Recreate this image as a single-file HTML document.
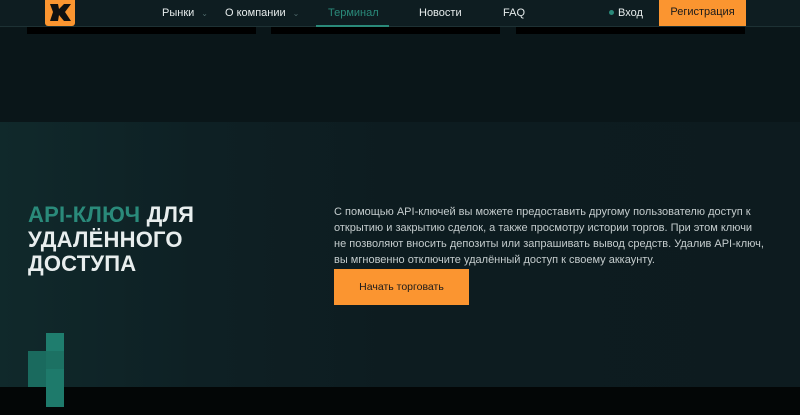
<!DOCTYPE html>
<html><head><meta charset="utf-8"><style>
*{margin:0;padding:0;box-sizing:border-box}
body{width:800px;height:415px;overflow:hidden;background:#0b171a;font-family:"Liberation Sans",sans-serif;position:relative}
.hdr{position:absolute;left:0;top:0;width:800px;height:27px;background:#0e1d21;border-bottom:1px solid #1d3134}
.nav{position:absolute;top:7px;font-size:11px;color:#e6ecec}
.car{color:#4f6a6c;font-size:8px;margin-left:7px}
.bar{position:absolute;top:27px;height:7px;background:#000}
.top{position:absolute;left:0;top:28px;width:800px;height:94px;background:#0a1619}
.low{position:absolute;left:0;top:122px;width:800px;height:265px;background:linear-gradient(90deg,#10292b 0%,#0e2024 25%,#0d1c20 50%,#0d1b1f 100%)}
.foot{position:absolute;left:0;top:387px;width:800px;height:28px;background:#030606}
h1{position:absolute;left:28px;top:203px;font-size:22px;line-height:24.5px;font-weight:700;color:#e8eeee;letter-spacing:0.2px}
h1 span{color:#2a8a7a}
p{position:absolute;left:334px;top:204px;width:432px;font-size:11px;line-height:16px;color:#c4cccd}
.btn{position:absolute;left:334px;top:269px;width:135px;height:36px;background:#fb9530;color:#1a1a1a;font-size:10.5px;text-align:center;line-height:36px}
.px{position:absolute}
</style></head><body>
<div class="top"></div>
<div class="low"></div>
<div class="foot"></div>
<div class="hdr"></div>
<div style="position:absolute;left:45px;top:0;width:30px;height:26px;background:#fb9530;border-radius:0 0 3px 3px"></div>
<svg style="position:absolute;left:45px;top:0" width="30" height="26" viewBox="0 0 30 26"><path d="M5 4 L13 4 L14 9 L19 4 L26 4 L20 12 L26 21 L19 21 L14 15 L13 21 L5 21 L8 12 Z" fill="#111"/></svg>
<div class="nav" style="left:162px">Рынки<span class="car">⌄</span></div>
<div class="nav" style="left:225px">О компании<span class="car">⌄</span></div>
<div class="nav" style="left:328px;color:#2a8a7a">Терминал</div>
<div style="position:absolute;left:316px;top:25px;width:73px;height:2px;background:#2a8a7a"></div>
<div class="nav" style="left:419px">Новости</div>
<div class="nav" style="left:503px">FAQ</div>
<div style="position:absolute;left:609px;top:10px;width:5px;height:5px;border-radius:50%;background:#2a8a7a"></div>
<div class="nav" style="left:618px">Вход</div>
<div style="position:absolute;left:659px;top:0;width:87px;height:26px;background:#fb9530;color:#1a1a1a;font-size:11px;text-align:center;line-height:25px">Регистрация</div>
<div class="bar" style="left:27px;width:229px"></div>
<div class="bar" style="left:271px;width:229px"></div>
<div class="bar" style="left:516px;width:229px"></div>
<h1><span>API-КЛЮЧ</span> ДЛЯ<br>УДАЛЁННОГО<br>ДОСТУПА</h1>
<p>С помощью API-ключей вы можете предоставить другому пользователю доступ к открытию и закрытию сделок, а также просмотру истории торгов. При этом ключи не позволяют вносить депозиты или запрашивать вывод средств. Удалив API-ключ, вы мгновенно отключите удалённый доступ к своему аккаунту.</p>
<div class="btn">Начать торговать</div>
<div class="px" style="left:46px;top:333px;width:18px;height:18px;background:#1f7d6e"></div>
<div class="px" style="left:28px;top:351px;width:18px;height:36px;background:#1a6a5e"></div>
<div class="px" style="left:46px;top:351px;width:18px;height:18px;background:#1c7163"></div>
<div class="px" style="left:46px;top:369px;width:18px;height:38px;background:#1e7a6b"></div>
</body></html>
